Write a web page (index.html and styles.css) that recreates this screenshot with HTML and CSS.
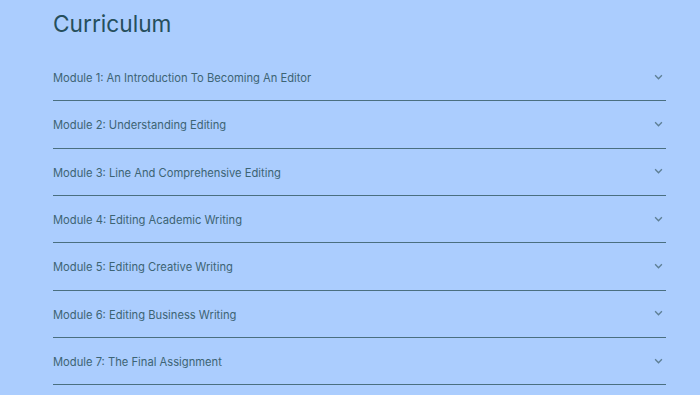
FILE: index.html
```html
<!DOCTYPE html>
<html lang="en">
<head>
    <meta charset="UTF-8">
    <meta name="viewport" content="width=device-width, initial-scale=1.0">
    <title>Curriculum</title>
    <link rel="stylesheet" href="styles.css">
</head>
<body>
    <section class="curriculum">
        <h2>Curriculum</h2>
        <div class="module-list">
            <div class="module"><span>Module 1: An Introduction To Becoming An Editor</span><svg class="chevron" viewBox="0 0 8 5"><path d="M1 1l3 3 3-3"/></svg></div>
            <div class="module"><span>Module 2: Understanding Editing</span><svg class="chevron" viewBox="0 0 8 5"><path d="M1 1l3 3 3-3"/></svg></div>
            <div class="module"><span>Module 3: Line And Comprehensive Editing</span><svg class="chevron" viewBox="0 0 8 5"><path d="M1 1l3 3 3-3"/></svg></div>
            <div class="module"><span>Module 4: Editing Academic Writing</span><svg class="chevron" viewBox="0 0 8 5"><path d="M1 1l3 3 3-3"/></svg></div>
            <div class="module"><span>Module 5: Editing Creative Writing</span><svg class="chevron" viewBox="0 0 8 5"><path d="M1 1l3 3 3-3"/></svg></div>
            <div class="module"><span>Module 6: Editing Business Writing</span><svg class="chevron" viewBox="0 0 8 5"><path d="M1 1l3 3 3-3"/></svg></div>
            <div class="module"><span>Module 7: The Final Assignment</span><svg class="chevron" viewBox="0 0 8 5"><path d="M1 1l3 3 3-3"/></svg></div>
        </div>
    </section>
</body>
</html>
```

FILE: styles.css
```css
body {
    margin: 0;
    background-color: #abcdfe;
    font-family: Inter, "Open Sans", sans-serif;
    color: #2c5562;
}

.curriculum {
    padding: 7px 34px 0 53px;
}

.curriculum h2 {
    margin: 0 0 14px 0;
    font-size: 22.7px;
    font-weight: 400;
    line-height: 33px;
    color: #264f5c;
}

.module {
    display: flex;
    justify-content: space-between;
    align-items: center;
    box-sizing: border-box;
    height: 47.33px;
    padding-top: 2px;
    border-bottom: 1px solid #4a6f80;
    font-size: 11.2px;
    color: #3d6474;
}

.chevron {
    width: 9px;
    height: 6px;
    margin-right: 3px;
    margin-top: -3px;
    fill: none;
    stroke: #5e7f95;
    stroke-width: 1.2;
}
```
